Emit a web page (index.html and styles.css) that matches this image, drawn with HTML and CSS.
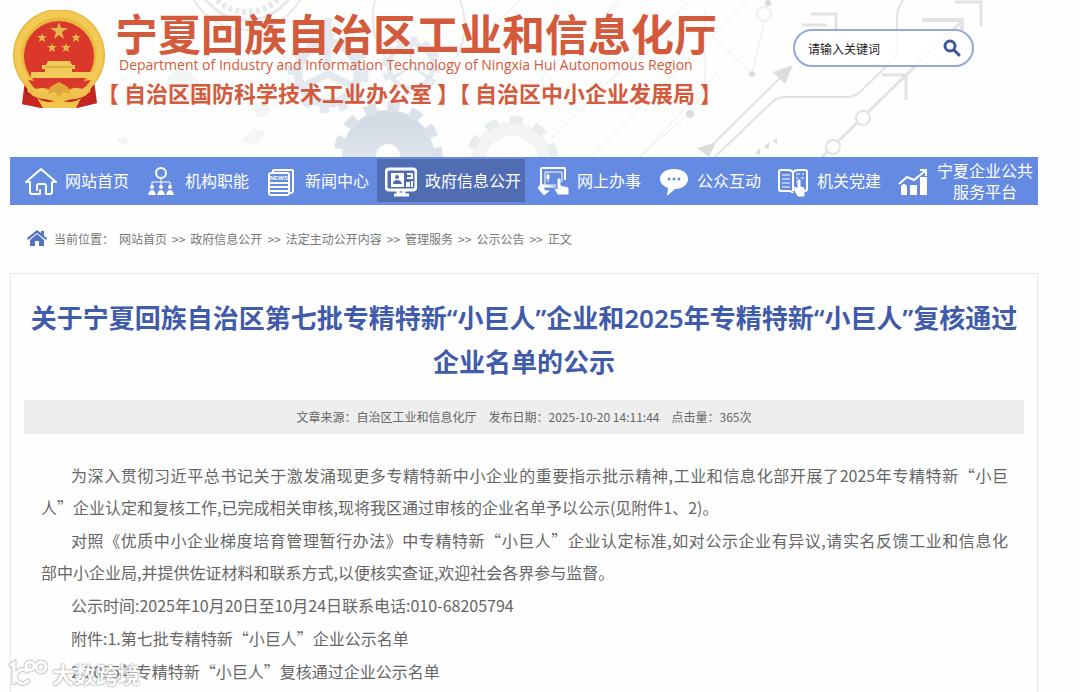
FILE: index.html
```
<!DOCTYPE html>
<html lang="zh-CN">
<head>
  <meta charset="UTF-8">
  <title>宁夏回族自治区工业和信息化厅</title>
  <link rel="stylesheet" href="styles.css">
</head>
<body>
  <header class="header">
    <svg class="header-bg" viewBox="0 0 1080 157" preserveAspectRatio="xMinYMin slice" aria-hidden="true">
      <defs>
        <linearGradient id="gearFill" x1="0" y1="0" x2="0" y2="1">
          <stop offset="0" stop-color="#d3dbe4"/>
          <stop offset="1" stop-color="#eef1f8"/>
        </linearGradient>
      </defs>
      <!-- gears -->
      <g fill="none" stroke="#e6e8ea">
        <circle cx="247" cy="-32" r="52" stroke-width="3"/>
        <circle cx="247" cy="-32" r="44" stroke-width="6" stroke-dasharray="4 3"/>
        <circle cx="247" cy="-32" r="62" stroke-width="2"/>
        <path d="M375 0c-6 25 0 45 14 62M460 0c8 22 6 40-4 58" stroke-width="2"/>
      </g>
      <g fill="none" stroke="#e3e9ee">
        <circle cx="328" cy="73" r="30" stroke-width="9"/>
        <circle cx="328" cy="73" r="37" stroke-width="7" stroke-dasharray="9 10"/>
        <path d="M328 18v50M300 88l28-14 28 14" stroke-width="7"/>
        <circle cx="411" cy="66" r="22" stroke-width="5"/>
        <circle cx="411" cy="66" r="27" stroke-width="5" stroke-dasharray="7 7"/>
        <path d="M411 44v22l-18 12M411 66l18 12" stroke-width="3"/>
      </g>
      <circle cx="388" cy="156" r="29" fill="none" stroke="url(#gearFill)" stroke-width="34"/>
      <circle cx="388" cy="156" r="49" fill="none" stroke="#dbe2ea" stroke-width="11" stroke-dasharray="12 11"/>
      <circle cx="512" cy="163" r="34" fill="none" stroke="#f1f3f5" stroke-width="14"/>
      <circle cx="512" cy="163" r="43" fill="none" stroke="#e9ecef" stroke-width="8" stroke-dasharray="13 12"/>
      <g fill="#f4f5f6">
        <circle cx="182" cy="87" r="17"/>
        <circle cx="262" cy="110" r="8"/>
        <path d="M116 140l8-4 6 4-4 6zM240 142l14-14 12 4-8 12z"/>
      </g>
      <!-- circuit lines -->
      <g fill="none" stroke="#ececec" stroke-width="1">
        <path d="M520 100L620 0M550 140L690 0M590 157L748 0M640 157L720 70M470 50l50-50M610 80l80-60"/>
        <path d="M705 10v80l-15 22-50 45M768 4l-16 70-40-38"/>
      </g>
      <g fill="none" stroke="#e2e2e4" stroke-width="2">
        <path d="M715 142l70-69M715 157l57-55q6-5 13-5h62q8 0 14-6l33-32q3-3 3-10V18q0-10 6-18"/>
        <path d="M802 25h25M811 14h25v18" stroke-width="3"/>
        <path d="M955 2h26v24M882 75h24v25" stroke-width="3"/>
        <path d="M822 157l84-82 54-52" stroke-width="3"/>
        <path d="M922 20h40v10" stroke-width="4"/>
      </g>
      <g fill="#fff" stroke="#e2e2e4" stroke-width="2">
        <circle cx="863" cy="118" r="7"/>
        <circle cx="833" cy="147" r="7"/>
        <circle cx="764" cy="14" r="7" stroke="#f0f0f0"/>
      </g>
      <g fill="#dcdcde">
        <path d="M773 72l20-7-8 19zM697 148l19-6-7 15zM755 153l5-5v7zM764 147l5-5v7zM773 141l4-3v6z"/>
        <circle cx="690" cy="114" r="4"/>
        <circle cx="752" cy="74" r="3"/>
        <circle cx="768" cy="3" r="3"/>
      </g>
    </svg>

    <div class="brand">
      <svg class="emblem" viewBox="0 0 94 98" aria-hidden="true">
        <path d="M13 70l-3 24 20 4h34l21-5-3-23z" fill="#c62622"/>
        <path d="M14 78l6 14M79 78l-6 14" stroke="#8f1a18" stroke-width="3"/>
        <circle cx="47" cy="45" r="46" fill="#e9b63f"/>
        <circle cx="47" cy="45" r="41" fill="none" stroke="#f2c952" stroke-width="7"/>
        <circle cx="47" cy="46" r="35" fill="#d9382b"/>
        <g fill="#e8b84c">
          <path d="M47 12l2 6h7l-6 4 2 7-5-4-5 4 2-7-6-4h7z"/>
          <path id="star" d="M30 23l1 3h4l-3 2 1 4-3-2-3 2 1-4-3-2h4z"/>
          <use href="#star" x="34"/>
          <use href="#star" x="10" y="10"/>
          <use href="#star" x="24" y="10"/>
        </g>
        <path d="M36 51h22l2 4h3v4h-3v3h23v6H19v-6h14v-3h-3v-4h4z" fill="#f0cb58"/>
        <path d="M33 57h28" stroke="#c98f2d" stroke-width="1"/>
        <path d="M16 70q31 6 63 0l-7 9q-25-5-49 0z" fill="#d9382b"/>
        <path d="M13 69q12 15 28 15l6-6 6 6q16 0 28-15l-3 14q-10 7-20 6l-11 4-11-4q-10 1-20-6z" fill="#eec04c"/>
        <path d="M38 77l9-5 9 5 2 7-7-2-4 5-4-5-7 2z" fill="#e0a63a"/>
        <path d="M17 82q6 8 15 9l-3 7-19-4zM77 82q-6 8-15 9l3 7 20-5z" fill="#c62622"/>
        <path d="M25 88q10 7 22 2 13 5 22-2l-5 10H31z" fill="#f2c64b"/>
      </svg>
      <div class="brand-text">
        <h1>宁夏回族自治区工业和信息化厅</h1>
        <p class="brand-en">Department of Industry and Information Technology of Ningxia Hui Autonomous Region</p>
        <p class="brand-sub">【 自治区国防科学技术工业办公室 】【 自治区中小企业发展局 】</p>
      </div>
    </div>

    <form class="search">
      <input type="text" placeholder="请输入关键词" aria-label="请输入关键词">
      <button type="submit" aria-label="搜索">
        <svg viewBox="0 0 18 18"><circle cx="7" cy="7" r="5" fill="none" stroke="#3f56a0" stroke-width="3"/><path d="M11 11l5 5" stroke="#3f56a0" stroke-width="3" stroke-linecap="round"/></svg>
      </button>
    </form>
  </header>

  <nav class="nav">
    <a href="#">
      <svg viewBox="0 0 32 32" fill="none" stroke="#fff" stroke-width="2" stroke-linejoin="round" stroke-linecap="round"><path d="M5 17H1L16 4l15 13h-4v10q0 2-2 2h-4v-8q0-2-2-2h-5q-2 0-2 2v4M5 17v10q0 2 2 2h8v-4"/></svg>
      <span>网站首页</span>
    </a>
    <a href="#">
      <svg viewBox="0 0 32 32" fill="#fff"><g fill="none" stroke="#fff" stroke-width="2"><circle cx="16" cy="8" r="5"/><path d="M16 13v8M7 21v-4h18v4" stroke-width="1"/></g><g id="people"><circle cx="7" cy="22" r="2"/><path d="M3 30q0-3 3-5h2q3 2 3 5z"/></g><use href="#people" x="9"/><use href="#people" x="18"/></svg>
      <span>机构职能</span>
    </a>
    <a href="#">
      <svg viewBox="0 0 32 32" fill="none" stroke="#fff" stroke-width="2"><path d="M8 7V6q0-1 1-1h18q1 0 1 1v20q0 2-3 2"/><rect x="4" y="8" width="20" height="22" rx="2"/><path d="M5 18h18M5 22h18M5 26h18"/><text x="14" y="15" class="news">NEWS</text></svg>
      <span>新闻中心</span>
    </a>
    <a href="#" class="active">
      <svg viewBox="0 0 32 32" fill="none" stroke="#fff" stroke-width="2"><rect x="1" y="4" width="30" height="21" rx="3" stroke-width="3"/><path d="M6 8h13v14H6z" fill="#fff" stroke="none"/><circle cx="12" cy="12" r="2" fill="#506db4" stroke="none"/><path d="M8 19q0-4 4-4t5 4z" fill="#506db4" stroke="none"/><path d="M22 9h5v4h-5M22 22v-4h2v4M27 22v-6"/><path d="M13 25v4h6v-4M9 30h15" stroke-width="3"/></svg>
      <span>政府信息公开</span>
    </a>
    <a href="#">
      <svg viewBox="0 0 32 32" fill="none" stroke="#fff" stroke-width="2"><path d="M4 20V4q0-1 1-1h22q1 0 1 1v11"/><path d="M8 7h17v10M8 7v13h11M11 8v9" stroke-width="1"/><path d="M11 10v4" stroke-width="3"/><path d="M4 19l-3 4 6 7 5-4H8l-2-4h13" fill="#fff" stroke-width="1"/><path d="M21 25V15q0-2 2-1v7l8 2v6H21l-3-5z" fill="#fff" stroke-width="1"/></svg>
      <span>网上办事</span>
    </a>
    <a href="#">
      <svg viewBox="0 0 32 32" fill="#fff"><path d="M17 4c8 0 14 4 14 10s-6 10-13 10l-8 7 1-8C6 21 3 18 3 14 3 8 9 4 17 4z"/><g fill="#658ae2"><circle cx="12" cy="14" r="1.500"/><circle cx="17" cy="14" r="1.500"/><circle cx="22" cy="14" r="1.500"/></g></svg>
      <span>公众互动</span>
    </a>
    <a href="#">
      <svg viewBox="0 0 32 32" fill="none" stroke="#fff" stroke-width="2"><path d="M16 7q-2-2-5-2H4Q2 5 2 7v17q0 2 2 2h8q3 0 4 2M16 7q2-2 5-2h7q2 0 2 2v17q0 2-2 2h-1M16 7v19"/><path d="M5 10h8M5 14h8M5 18h8M5 22h8M19 9h4M25 9h2M19 13h2M24 13h3M19 17h1" stroke-width="1"/><path d="M21 15v9l-3-2-1 2 4 7h6v-8l-4-1v-7z" fill="#fff" stroke-width="1"/></svg>
      <span>机关党建</span>
    </a>
    <a href="#">
      <svg viewBox="0 0 32 32" fill="#fff"><path d="M4 21q3-4 6 0v9H4zM13 20h7v10h-7zM23 12h7v18h-7z"/><path d="M2 19l8-7 7 3L28 6M23 5h6v6" fill="none" stroke="#fff" stroke-width="2"/></svg>
      <span>宁夏企业公共<br>服务平台</span>
    </a>
  </nav>

  <div class="breadcrumb">
    <svg viewBox="0 0 20 16" fill="#5573bf" aria-hidden="true"><path d="M0 8l10-8 4 3V1h3v5l3 2-1 2-9-7-9 7z"/><path d="M3 10l7-6 7 6v6h-5v-5H8v5H3z"/></svg>
    <span>当前位置：</span>
    <a href="#">网站首页</a> &gt;&gt;
    <a href="#">政府信息公开</a> &gt;&gt;
    <a href="#">法定主动公开内容</a> &gt;&gt;
    <a href="#">管理服务</a> &gt;&gt;
    <a href="#">公示公告</a> &gt;&gt;
    <span>正文</span>
  </div>

  <main class="article">
    <h2>关于宁夏回族自治区第七批专精特新“小巨人”企业和2025年专精特新“小巨人”复核通过企业名单的公示</h2>
    <div class="meta">
      <span>文章来源：自治区工业和信息化厅</span>
      <span>发布日期：2025-10-20 14:11:44</span>
      <span>点击量：365次</span>
    </div>
    <div class="content">
      <p>为深入贯彻习近平总书记关于激发涌现更多专精特新中小企业的重要指示批示精神,工业和信息化部开展了2025年专精特新“小巨<span class="keep">人”企业认定</span>和复核工作,已完成相关审核,现将我区通过审核的企业名单予以公示(见附件1、2)。</p>
      <p>对照《优质中小企业梯度培育管理暂行办法》中专精特新“小巨人”企业认定标准,如对公示企业有异议,请实名反馈工业和信息化<span class="keep">部中小企业局</span>,并提供佐证材料和联系方式,以便核实查证,欢迎社会各界参与监督。</p>
      <p>公示时间:2025年10月20日至10月24日联系电话:010-68205794</p>
      <p>附件:1.第七批专精特新“小巨人”企业公示名单</p>
      <p>2.2025年专精特新“小巨人”复核通过企业公示名单</p>
    </div>
  </main>

  <div class="watermark">
    <svg viewBox="0 0 40 28" fill="none" stroke-linecap="round" aria-hidden="true">
      <g stroke="#bbb" stroke-width="5"><path d="M3 6l3-2v20M19 12a7 7 0 1 0 1 10"/><circle cx="22" cy="7" r="4"/><circle cx="33" cy="8" r="5"/></g>
      <g stroke="#fff" stroke-width="3"><path d="M3 6l3-2v20M19 12a7 7 0 1 0 1 10"/><circle cx="22" cy="7" r="4"/><circle cx="33" cy="8" r="5"/></g>
    </svg>
    <span>大数跨境</span>
  </div>
</body>
</html>
```

FILE: styles.css
```
* {
  box-sizing: border-box;
}

body {
  position: relative;
  height: 100vh;
  margin: 0;
  padding: 0 42px 0 10px;
  overflow: hidden;
  display: flex;
  flex-direction: column;
  background: #fefefe;
  font-family: "Noto Sans CJK SC", sans-serif;
  color: #666;
}

h1,
h2,
p {
  margin: 0;
}

a {
  color: inherit;
  text-decoration: none;
}

/* header */
.header {
  flex: none;
  display: flex;
  justify-content: space-between;
  align-items: flex-start;
  height: 157px;
  padding-right: 64px;
}

.header-bg {
  position: absolute;
  top: 0;
  left: 0;
  width: 100%;
  height: 157px;
  z-index: -1;
}

.brand {
  display: flex;
  gap: 9px;
  padding-top: 10px;
}

.emblem {
  width: 94px;
  height: 98px;
  margin-left: 2px;
}

.brand-text {
  color: #d35b3c;
  white-space: nowrap;
}

.brand-text h1 {
  font-size: 43px;
  line-height: 44px;
  font-weight: bold;
}

.brand-en {
  font-family: "Open Sans", sans-serif;
  font-size: 14px;
  line-height: 22px;
  padding-left: 4px;
}

.brand-sub {
  font-size: 22px;
  line-height: 32px;
  font-weight: bold;
  margin-left: -18px;
}

.search {
  display: flex;
  align-items: center;
  width: 181px;
  height: 38px;
  margin-top: 29px;
  padding: 0 11px 0 13px;
  border: 2px solid #94a9d8;
  border-radius: 19px;
  background: rgba(255, 255, 255, 0.8);
}

.search input {
  flex: 1;
  min-width: 0;
  padding: 0;
  border: none;
  outline: none;
  background: none;
  font-family: inherit;
  font-size: 12px;
  color: #333;
}

.search input::placeholder {
  color: #222;
}

.search button {
  display: flex;
  padding: 0;
  border: none;
  background: none;
  cursor: pointer;
}

.search svg {
  width: 18px;
  height: 18px;
}

/* main menu */
.nav {
  flex: none;
  display: flex;
  height: 48px;
  padding: 2px 0 3px 7px;
  background: #658ae2;
  color: #fff;
  font-size: 16px;
  line-height: 21px;
}

.nav a {
  display: flex;
  align-items: center;
  gap: 8px;
  padding: 0 8px;
  text-align: center;
  white-space: nowrap;
}

.nav a:last-child {
  padding-right: 0;
}

.nav a.active {
  margin-right: 4px;
  padding-right: 4px;
  background: #506db4;
}

.nav svg {
  width: 32px;
  height: 32px;
}

.news {
  fill: #fff;
  stroke: none;
  font-family: "Liberation Sans", sans-serif;
  font-size: 6px;
  font-weight: bold;
  text-anchor: middle;
}

/* breadcrumb */
.breadcrumb {
  flex: none;
  display: flex;
  align-items: center;
  gap: 5px;
  height: 66px;
  margin-bottom: 2px;
  padding-left: 17px;
  font-size: 12px;
  color: #777;
}

.breadcrumb svg {
  width: 20px;
  height: 16px;
  margin-right: 2px;
}

/* article */
.article {
  flex: 1 0 auto;
  padding: 22px 13px 0;
  border: 1px solid #e6e6e6;
  border-bottom: none;
}

.article h2 {
  font-family: "Noto Sans", "Noto Sans CJK SC", sans-serif;
  font-size: 26px;
  line-height: 44px;
  font-weight: 600;
  text-align: center;
  color: #3f5ba9;
}

.meta {
  display: flex;
  justify-content: center;
  gap: 12px;
  margin: 16px 0 25px;
  background: #eee;
  font-size: 12px;
  line-height: 34px;
}

.content {
  padding: 0 16px 0 17px;
  font-size: 16px;
  line-height: 32px;
}

.content p {
  margin-bottom: 1px;
  text-indent: 30px;
  text-align: justify;
}

.keep {
  white-space: nowrap;
}

/* watermark */
.watermark {
  position: absolute;
  left: 8px;
  bottom: 4px;
  display: flex;
  align-items: center;
  gap: 4px;
  opacity: 0.8;
  color: #fff;
  font-size: 22px;
  line-height: 30px;
  font-weight: bold;
  text-shadow: 0 0 2px #888, 0 0 2px #888;
}

.watermark svg {
  width: 40px;
  height: 28px;
}
```
